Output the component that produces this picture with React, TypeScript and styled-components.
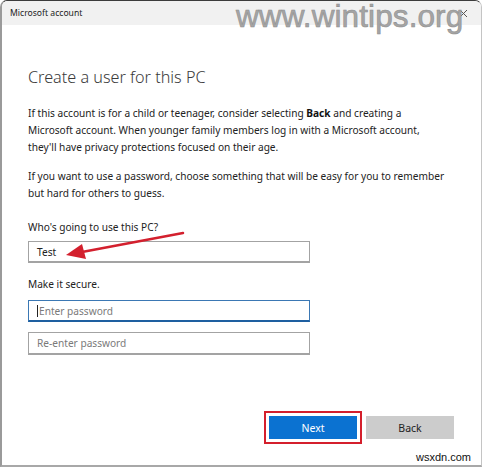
import styled, { createGlobalStyle } from "styled-components";

const GlobalStyle = createGlobalStyle`
    html, body {
        margin: 0;
        padding: 0;
        background: #ffffff;
    }
    body {
        font-family: "Noto Sans", "Open Sans", sans-serif;
        color: #1b1b1b;
    }
`;

const Window = styled.div`
    position: relative;
    box-sizing: border-box;
    width: 482px;
    height: 467px;
    display: flex;
    flex-direction: column;
    background: #ffffff;
    border-top: 1px solid #3c3c3c;
    border-left: 2px solid #9a9a9a;
    border-right: 1px solid #c4c4c4;
    border-bottom: 2px solid #a8a8a8;
    border-radius: 7px 7px 0 0;
    overflow: hidden;
`;

const TitleBar = styled.div`
    height: 24px;
    flex: none;
    display: flex;
    align-items: center;
    justify-content: space-between;
    padding: 0 13px 0 8px;
    background: #f1f1f1;
    font-size: 8.6px;
    color: #222222;
`;

const Content = styled.div`
    display: flex;
    flex-direction: column;
    padding: 0 20px 0 26px;
`;

const Heading = styled.h1`
    margin: 41px 0 0;
    font-size: 16.2px;
    line-height: 22px;
    font-weight: 300;
    color: #3a3a3a;
`;

const Paragraph = styled.p<{ $gap: number }>`
    margin: ${(p) => p.$gap}px 0 0;
    font-size: 10.15px;
    line-height: 17px;
    color: #222222;
    white-space: nowrap;

    b {
        font-weight: 700;
        color: #111111;
    }
`;

const Label = styled.div<{ $gap: number }>`
    margin-top: ${(p) => p.$gap}px;
    font-size: 10.15px;
    line-height: 17px;
    color: #222222;
`;

const Field = styled.div<{ $gap: number; $focused?: boolean; $placeholder?: boolean; $tall?: boolean }>`
    box-sizing: border-box;
    width: 282px;
    height: ${(p) => (p.$tall ? 23 : 22)}px;
    margin-top: ${(p) => p.$gap}px;
    display: flex;
    align-items: center;
    padding-left: 8px;
    font-size: 10.15px;
    color: ${(p) => (p.$placeholder ? "#7a7a7a" : "#222222")};
    border: 1.5px solid ${(p) => (p.$focused ? "#3b78b4" : "#a3a3a3")};
    border-bottom: 2px solid ${(p) => (p.$focused ? "#1e5fa0" : "#a3a3a3")};
`;

const Caret = styled.span`
    width: 1px;
    height: 12px;
    background: #222222;
    margin-right: 1px;
`;

const Footer = styled.div`
    margin-top: auto;
    display: flex;
    justify-content: flex-end;
    gap: 9px;
    padding: 0 27px 26px 0;
`;

const Button = styled.button<{ $primary?: boolean }>`
    width: 88px;
    height: 23px;
    border: none;
    padding: 0;
    font-family: inherit;
    font-size: 10.5px;
    background: ${(p) => (p.$primary ? "#0b72d1" : "#cccccc")};
    color: ${(p) => (p.$primary ? "#ffffff" : "#222222")};
    outline: ${(p) => (p.$primary ? "2.5px solid #d41f2c" : "none")};
    outline-offset: 3.5px;
`;

const WinTips = styled.div`
    position: absolute;
    top: 0;
    left: 234px;
    font-family: "Liberation Sans", Arial, sans-serif;
    font-size: 31.5px;
    line-height: 1;
    letter-spacing: 0.1px;
    color: #a5a5a5;
    -webkit-text-stroke: 0.6px #8f8f8f;
    pointer-events: none;
`;

const Wsxdn = styled.div`
    position: absolute;
    right: 10px;
    bottom: 2px;
    font-family: "Liberation Sans", Arial, sans-serif;
    font-size: 11px;
    color: #111111;
`;

const ArrowLayer = styled.svg`
    position: absolute;
    left: 0;
    top: 0;
    pointer-events: none;
`;

export default function App() {
    return (
        <>
            <GlobalStyle />
            <Window>
                <TitleBar>
                    <span>Microsoft account</span>
                    <svg width="9" height="9" viewBox="0 0 9 9">
                        <path d="M1 1L8 8M8 1L1 8" stroke="#555" strokeWidth="1" />
                    </svg>
                </TitleBar>
                <Content>
                    <Heading>Create a user for this PC</Heading>
                    <Paragraph $gap={17}>
                        If this account is for a child or teenager, consider selecting <b>Back</b> and creating a
                        <br />
                        Microsoft account. When younger family members log in with a Microsoft account,
                        <br />
                        they'll have privacy protections focused on their age.
                    </Paragraph>
                    <Paragraph $gap={12}>
                        If you want to use a password, choose something that will be easy for you to remember
                        <br />
                        but hard for others to guess.
                    </Paragraph>
                    <Label $gap={17}>Who's going to use this PC?</Label>
                    <Field $gap={5}>Test</Field>
                    <Label $gap={13}>Make it secure.</Label>
                    <Field $gap={7} $focused $placeholder>
                        <Caret />
                        Enter password
                    </Field>
                    <Field $gap={10} $placeholder $tall>
                        Re-enter password
                    </Field>
                </Content>
                <Footer>
                    <Button $primary>Next</Button>
                    <Button>Back</Button>
                </Footer>
                <WinTips>www.wintips.org</WinTips>
                <Wsxdn>wsxdn.com</Wsxdn>
                <ArrowLayer width="482" height="467" viewBox="0 0 482 467">
                    <line x1="181" y1="232" x2="80" y2="251" stroke="#d3202e" strokeWidth="2.5" strokeLinecap="round" />
                    <polygon points="64,254 84,258 80,243" fill="#d3202e" />
                </ArrowLayer>
            </Window>
        </>
    );
}
